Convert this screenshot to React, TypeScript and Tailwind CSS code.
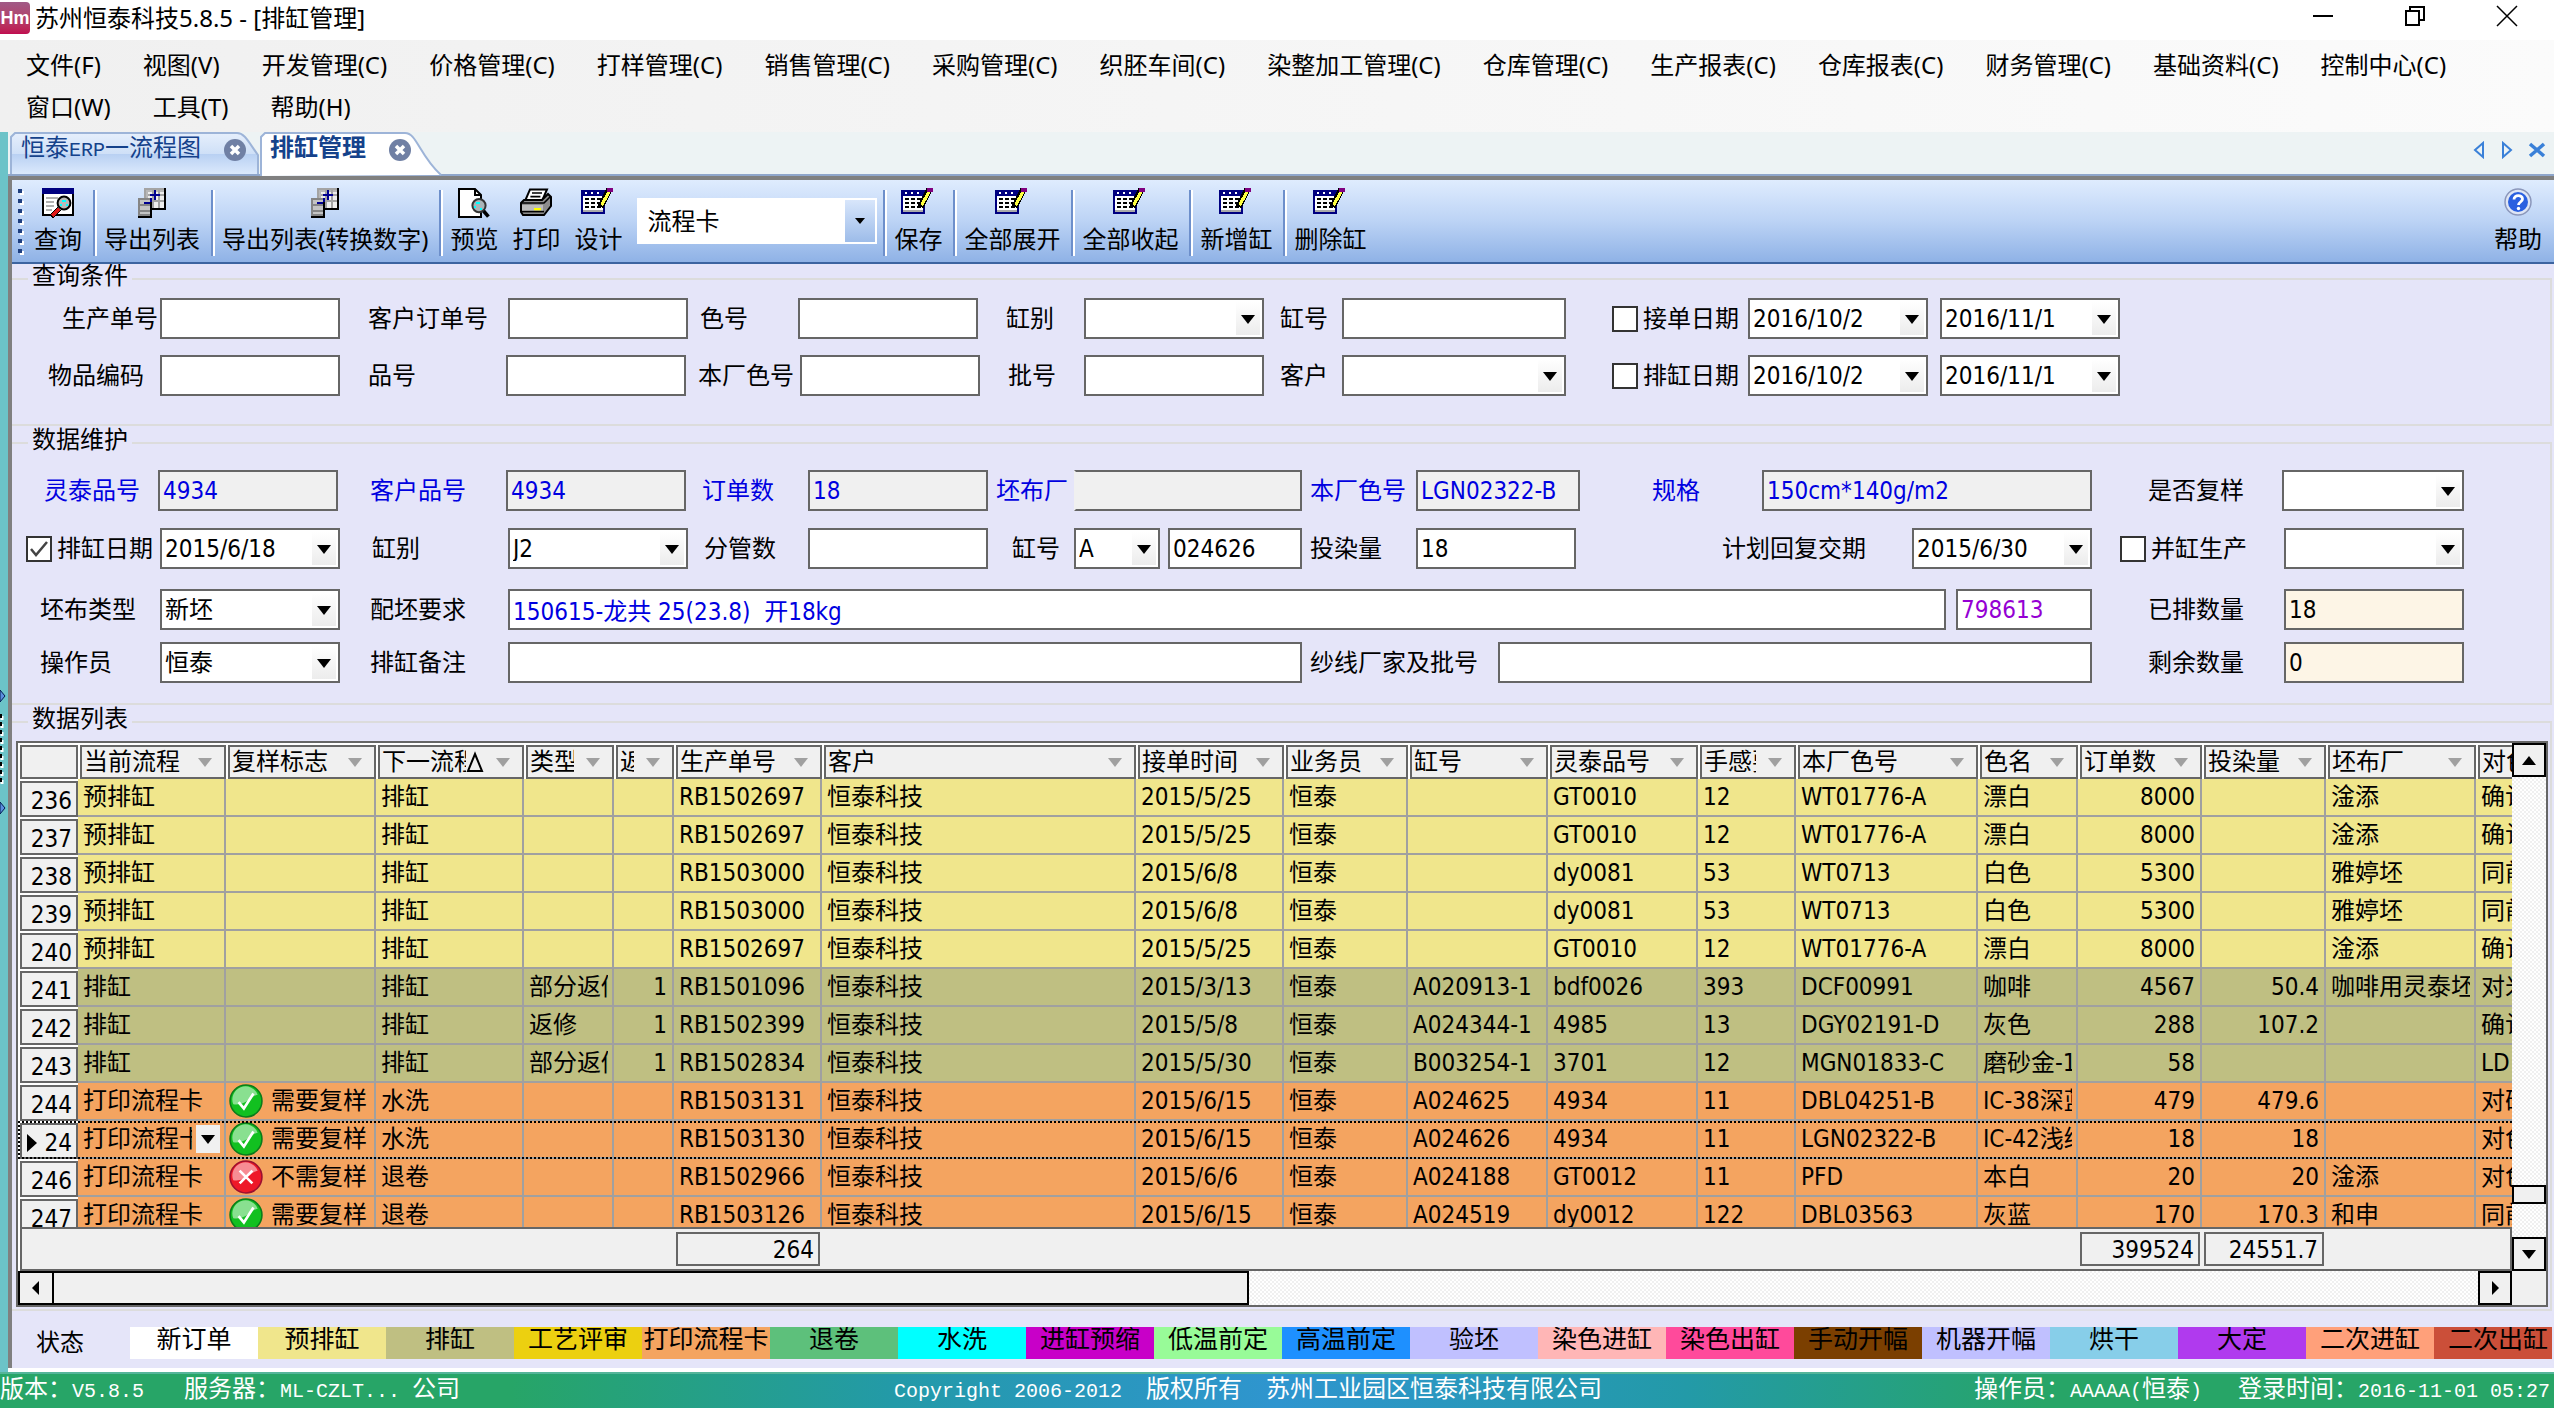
import React, { useId } from "react";
import clsx from "clsx";

type IconName = "query" | "export" | "preview" | "print" | "design" | "help";

interface Tool {
  label: string;
  icon: IconName;
}

interface Column {
  title: string;
  width: string;
  align?: "right";
  filter?: boolean;
  sorted?: boolean;
}

interface Row {
  no: string;
  tone: "plan" | "queue" | "card";
  cells: string[];
  flag?: "yes" | "no";
  current?: boolean;
}

const MENUS = [
  "文件(F)", "视图(V)", "开发管理(C)", "价格管理(C)", "打样管理(C)", "销售管理(C)", "采购管理(C)",
  "织胚车间(C)", "染整加工管理(C)", "仓库管理(C)", "生产报表(C)", "仓库报表(C)", "财务管理(C)",
  "基础资料(C)", "控制中心(C)", "窗口(W)", "工具(T)", "帮助(H)",
];

const COLUMNS: Column[] = [
  { title: "当前流程", width: "w-[148px]", filter: true },
  { title: "复样标志", width: "w-[150px]", filter: true },
  { title: "下一流程", width: "w-[148px]", filter: true, sorted: true },
  { title: "类型", width: "w-[90px]", filter: true },
  { title: "返修", width: "w-[60px]", filter: true, align: "right" },
  { title: "生产单号", width: "w-[148px]", filter: true },
  { title: "客户", width: "w-[314px]", filter: true },
  { title: "接单时间", width: "w-[148px]", filter: true },
  { title: "业务员", width: "w-[124px]", filter: true },
  { title: "缸号", width: "w-[140px]", filter: true },
  { title: "灵泰品号", width: "w-[150px]", filter: true },
  { title: "手感要求", width: "w-[98px]", filter: true },
  { title: "本厂色号", width: "w-[182px]", filter: true },
  { title: "色名", width: "w-[100px]", filter: true },
  { title: "订单数", width: "w-[124px]", filter: true, align: "right" },
  { title: "投染量", width: "w-[124px]", filter: true, align: "right" },
  { title: "坯布厂", width: "w-[150px]", filter: true },
  { title: "对色", width: "w-[100px]", filter: true },
];

const ROWS: Row[] = [
  { no: "236", tone: "plan", cells: ["预排缸", "", "排缸", "", "", "RB1502697", "恒泰科技", "2015/5/25", "恒泰", "", "GT0010", "12", "WT01776-A", "漂白", "8000", "", "淦添", "确认"] },
  { no: "237", tone: "plan", cells: ["预排缸", "", "排缸", "", "", "RB1502697", "恒泰科技", "2015/5/25", "恒泰", "", "GT0010", "12", "WT01776-A", "漂白", "8000", "", "淦添", "确认"] },
  { no: "238", tone: "plan", cells: ["预排缸", "", "排缸", "", "", "RB1503000", "恒泰科技", "2015/6/8", "恒泰", "", "dy0081", "53", "WT0713", "白色", "5300", "", "雅婷坯", "同前"] },
  { no: "239", tone: "plan", cells: ["预排缸", "", "排缸", "", "", "RB1503000", "恒泰科技", "2015/6/8", "恒泰", "", "dy0081", "53", "WT0713", "白色", "5300", "", "雅婷坯", "同前"] },
  { no: "240", tone: "plan", cells: ["预排缸", "", "排缸", "", "", "RB1502697", "恒泰科技", "2015/5/25", "恒泰", "", "GT0010", "12", "WT01776-A", "漂白", "8000", "", "淦添", "确认"] },
  { no: "241", tone: "queue", cells: ["排缸", "", "排缸", "部分返修", "1", "RB1501096", "恒泰科技", "2015/3/13", "恒泰", "A020913-1", "bdf0026", "393", "DCF00991", "咖啡", "4567", "50.4", "咖啡用灵泰坯", "对米"] },
  { no: "242", tone: "queue", cells: ["排缸", "", "排缸", "返修", "1", "RB1502399", "恒泰科技", "2015/5/8", "恒泰", "A024344-1", "4985", "13", "DGY02191-D", "灰色", "288", "107.2", "", "确认"] },
  { no: "243", tone: "queue", cells: ["排缸", "", "排缸", "部分返修", "1", "RB1502834", "恒泰科技", "2015/5/30", "恒泰", "B003254-1", "3701", "12", "MGN01833-C", "磨砂金-1", "58", "", "", "LD"] },
  { no: "244", tone: "card", flag: "yes", cells: ["打印流程卡", "需要复样", "水洗", "", "", "RB1503131", "恒泰科技", "2015/6/15", "恒泰", "A024625", "4934", "11", "DBL04251-B", "IC-38深蓝", "479", "479.6", "", "对确"] },
  { no: "24", tone: "card", flag: "yes", current: true, cells: ["打印流程卡", "需要复样", "水洗", "", "", "RB1503130", "恒泰科技", "2015/6/15", "恒泰", "A024626", "4934", "11", "LGN02322-B", "IC-42浅绿", "18", "18", "", "对色"] },
  { no: "246", tone: "card", flag: "no", cells: ["打印流程卡", "不需复样", "退卷", "", "", "RB1502966", "恒泰科技", "2015/6/6", "恒泰", "A024188", "GT0012", "11", "PFD", "本白", "20", "20", "淦添", "对色"] },
  { no: "247", tone: "card", flag: "yes", cells: ["打印流程卡", "需要复样", "退卷", "", "", "RB1503126", "恒泰科技", "2015/6/15", "恒泰", "A024519", "dy0012", "122", "DBL03563", "灰蓝", "170", "170.3", "和申", "同前"] },
];

const TONES = {
  plan: "bg-[#f0e68c]",
  queue: "bg-[#bfbf82]",
  card: "bg-[#f4a460]",
};

const STATES = [
  { label: "新订单", color: "bg-white" },
  { label: "预排缸", color: "bg-[#f0e68c]" },
  { label: "排缸", color: "bg-[#bfbf82]" },
  { label: "工艺评审", color: "bg-[#ecd010]" },
  { label: "打印流程卡", color: "bg-[#f4a460]" },
  { label: "退卷", color: "bg-[#5dc07b]" },
  { label: "水洗", color: "bg-[#00ffff]" },
  { label: "进缸预缩", color: "bg-[#c800c8]" },
  { label: "低温前定", color: "bg-[#98fb98]" },
  { label: "高温前定", color: "bg-[#1e90ff]" },
  { label: "验坯", color: "bg-[#c0c0ff]" },
  { label: "染色进缸", color: "bg-[#ffb6b6]" },
  { label: "染色出缸", color: "bg-[#ff4a9b]" },
  { label: "手动开幅", color: "bg-[#7b3f00]" },
  { label: "机器开幅", color: "bg-[#c0c0ff]" },
  { label: "烘干", color: "bg-[#87cee9]" },
  { label: "大定", color: "bg-[#b03aee]" },
  { label: "二次进缸", color: "bg-[#ffa07a]" },
  { label: "二次出缸", color: "bg-[#cb4f39]" },
];

const BOX = "h-[41px] border-2 border-[#666] px-[3px] leading-6 outline-none";

/* ---------- icons ---------- */

const ToolIcon: React.FC<{ name: IconName }> = ({ name }) => {
  if (name === "query") {
    return (
      <svg width="32" height="32" viewBox="0 0 16 16" shapeRendering="crispEdges">
        <path d="M.5.5h15v13H.5z" fill="#fff" stroke="#000" />
        <path d="M0 0h16v3H0z" fill="#000080" />
        <path d="M2 5h6M2 7h4M2 9h4M2 11h3" stroke="#b0b0b0" />
        <circle cx="11" cy="7.5" r="3.2" fill="#b9b9b9" stroke="#000" shapeRendering="auto" />
        <path d="M10 6h2v1h-2zM12 8h1v1h-1zM9 8h1v1H9z" fill="#0ff" />
        <path d="M8.500 10.500L4.500 14.500" stroke="#000" strokeWidth="2.600" />
        <path d="M8.500 10.500L5 14" stroke="#e01818" strokeWidth="1.500" />
      </svg>
    );
  }
  if (name === "export") {
    return (
      <svg width="32" height="32" viewBox="0 0 16 16" shapeRendering="crispEdges">
        <path d="M4 0h11v11H4z" fill="#000" />
        <path d="M4 0h10v10H4z" fill="#eee" />
        <path d="M4 0h10v2H4zM4 0h2v6H4z" fill="#b8b8b8" />
        <path d="M4 .5h10M4.500 0v5M6 3.500h8M6 6.500h8M8.500 1v9M11.500 1v9" stroke="#a4a4a4" fill="none" />
        <path d="M1 5h7v10H1z" fill="#000" />
        <path d="M1 5h6v9H1z" fill="#c4c4c4" />
        <path d="M1.500 5v9M1 5.500h6M2 8.500h5M2 11.500h5M1 13.500h6" stroke="#858585" fill="none" />
        <path d="M4 7h3v1H4zM7 5h1v2H7zM7 3h5v1H7zM9 1h1v5H9z" fill="#000090" />
      </svg>
    );
  }
  if (name === "preview") {
    return (
      <svg width="32" height="32" viewBox="0 0 16 16">
        <path d="M.5.5h8l3 3v11H.5z" fill="#fff" stroke="#000" />
        <path d="M8.500.5v3h3" fill="none" stroke="#000" />
        <circle cx="10.500" cy="8.800" r="3.300" fill="#aab4b8" stroke="#333" />
        <path d="M9 7h2v1H9zM8 9h1v1H8zM11 10h1v1h-1z" fill="#0ff" />
        <path d="M12.800 11.500l2.400 2.800" stroke="#000" strokeWidth="1.800" />
      </svg>
    );
  }
  if (name === "print") {
    return (
      <svg width="32" height="32" viewBox="0 0 16 16">
        <path d="M5 .7h8.500L11 6.500H2.500z" fill="#fff" stroke="#000" />
        <path d="M6 2.500h5M5.200 4.300h5" stroke="#000" strokeWidth=".8" />
        <path d="M2 6h9l3-3 1.500 1.500V9l-3.500 4.500H1.500L.5 12V7.500z" fill="#8d8d8d" stroke="#000" />
        <path d="M1 7.500h11l3-3" stroke="#000" fill="none" strokeWidth=".8" />
        <path d="M1 8.500h10.500v3H1z" fill="#bcbcbc" />
        <path d="M7 10h3.500v1.200H7z" fill="#ff0" />
        <path d="M1 11.800h11" stroke="#000" strokeWidth=".8" />
      </svg>
    );
  }
  if (name === "design") {
    return (
      <svg width="34" height="32" viewBox="0 0 17 16" shapeRendering="crispEdges">
        <path d="M0 1h12v12H0z" fill="#000080" />
        <path d="M1 4h10v7H1z" fill="#fff" />
        <path d="M1 11h10v1H1z" fill="#aaa" />
        <path d="M2 2.500h1M5 2.500h1M8 2.500h1" stroke="#fff" />
        <path d="M2 5.500h8M2 7.500h8M2 9.500h8" stroke="#000" strokeDasharray="2 1" />
        <path d="M14.500 0L9.800 9.500" stroke="#000" strokeWidth="3" />
        <path d="M14 2L10.300 8.500" stroke="#ffff40" strokeWidth="1.600" />
        <path d="M13 0h3v2h-3z" fill="#800080" />
      </svg>
    );
  }
  return (
    <svg width="32" height="32" viewBox="0 0 32 32">
      <circle cx="16" cy="14" r="13" fill="#dfe6f5" stroke="#8b97bb" strokeWidth="1.500" />
      <circle cx="16" cy="14" r="10" fill="#2a60e0" />
      <path d="M12 11.500c0-5 8.500-5 8.500-.5 0 3-4 3-4 6" fill="none" stroke="#fff" strokeWidth="2.800" />
      <circle cx="16.500" cy="20.500" r="1.700" fill="#fff" />
    </svg>
  );
};

const CloseDot: React.FC = () => (
  <svg width="24" height="24" viewBox="0 0 24 24">
    <circle cx="12" cy="12" r="11" fill="#7080a4" />
    <path d="M8 8l8 8M16 8l-8 8" stroke="#fff" strokeWidth="3.500" />
  </svg>
);

const FlagIcon: React.FC<{ kind: "yes" | "no" }> = ({ kind }) => (
  <svg className="shrink-0" width="34" height="34" viewBox="0 0 32 32">
    <circle cx="16" cy="16" r="15" fill={kind === "yes" ? "#12c020" : "#ee1828"} stroke={kind === "yes" ? "#0c7a1c" : "#9c1030"} strokeWidth="1.500" />
    <path d="M4 19A12 12 0 0 1 27 10C21 11 16 21 4 19z" fill="#fff" opacity=".5" />
    <path d={kind === "yes" ? "M9 17l5 6 9-14" : "M10 10l12 12M22 10L10 22"} fill="none" stroke="#fff" strokeWidth="2.500" />
  </svg>
);

const Triangle: React.FC<{ className?: string; d?: string }> = ({ className, d = "M0 0h14L7 9z" }) => (
  <svg className={className} width="14" height="14" viewBox="0 -3 14 14" fill="currentColor">
    <path d={d} />
  </svg>
);

/* ---------- form parts ---------- */

interface TextProps {
  label: string;
  labelClass: string;
  className: string;
  value?: string;
}

const TextField: React.FC<TextProps> = ({ label, labelClass, className, value = "" }) => {
  const id = useId();
  return (
    <>
      <label htmlFor={id} className={clsx("shrink-0 whitespace-nowrap", labelClass)}>{label}</label>
      <input id={id} defaultValue={value} className={clsx(BOX, className)} />
    </>
  );
};

const Drop: React.FC<{ id?: string; title?: string; className: string; value?: string }> = ({ id, title, className, value = "" }) => (
  <div className={clsx("relative", className)}>
    <select id={id} aria-label={title} className={clsx(BOX, "w-full appearance-none bg-white")}>
      <option>{value}</option>
    </select>
    <span className="pointer-events-none absolute top-1 right-1 bottom-1 flex w-6 items-center justify-center bg-gradient-to-b from-white to-[#ececec]">
      <Triangle />
    </span>
  </div>
);

const SelectField: React.FC<TextProps> = ({ label, labelClass, className, value }) => {
  const id = useId();
  return (
    <>
      <label htmlFor={id} className={clsx("shrink-0 whitespace-nowrap", labelClass)}>{label}</label>
      <Drop id={id} className={className} value={value} />
    </>
  );
};

const Check: React.FC<{ label: string; className: string; checked?: boolean }> = ({ label, className, checked }) => (
  <label className={clsx("flex shrink-0 items-center gap-[5px] whitespace-nowrap", className)}>
    <span className="relative flex">
      <input type="checkbox" defaultChecked={checked} className="peer h-[26px] w-[26px] appearance-none border-2 border-[#333] bg-white" />
      <svg className="pointer-events-none absolute inset-0 hidden peer-checked:block" width="26" height="26" viewBox="0 0 26 26">
        <path d="M5 13l5 6L21 6" fill="none" stroke="#444" strokeWidth="2.500" />
      </svg>
    </span>
    {label}
  </label>
);

const Group: React.FC<{ title: string; className?: string; children: React.ReactNode }> = ({ title, className, children }) => (
  <fieldset className={clsx("mr-[2px] min-w-0 border-2 border-l-0 border-[#dcdcdc]", className)}>
    <legend className="ml-4 h-[30px] px-1 leading-6">{title}</legend>
    {children}
  </fieldset>
);

/* ---------- window parts ---------- */

const TitleBar: React.FC = () => (
  <header className="flex h-10 items-start justify-between bg-white">
    <div className="flex items-center gap-[5px]">
      <span className="flex h-8 w-[30px] items-center justify-center rounded-r bg-gradient-to-b from-[#a05a86] to-[#c00a50] font-['Liberation_Sans',sans-serif] text-[18px] font-bold text-white">Hm</span>
      <h1 className="leading-9">苏州恒泰科技5.8.5 - [排缸管理]</h1>
    </div>
    <div className="flex gap-[70px] pt-[5px] pr-9">
      <button aria-label="最小化">
        <svg width="22" height="22" viewBox="0 0 22 22"><path d="M1 11h20" stroke="#000" strokeWidth="2" /></svg>
      </button>
      <button aria-label="还原">
        <svg width="22" height="22" viewBox="0 0 22 22"><path d="M2 6h13v14H2zM6 6V2h14v13h-5" fill="none" stroke="#000" strokeWidth="2" /></svg>
      </button>
      <button aria-label="关闭">
        <svg width="22" height="22" viewBox="0 0 22 22"><path d="M1 1l20 20M21 1L1 21" stroke="#000" strokeWidth="1.500" /></svg>
      </button>
    </div>
  </header>
);

const MenuBar: React.FC = () => (
  <nav className="flex h-[92px] flex-wrap content-start gap-x-[42px] bg-gradient-to-r from-[#f0f0f0] to-[#fbfbfb] pt-1 pr-16 pl-[26px]">
    {MENUS.map((m) => (
      <button key={m} className="h-[42px] whitespace-nowrap">{m}</button>
    ))}
  </nav>
);

const TabStrip: React.FC = () => (
  <div className="flex h-12 justify-between border-b-4 border-b-[#808080] bg-[#edf3f4] font-['Liberation_Mono','Noto_Sans_CJK_SC',monospace] text-[#15428b] shadow-[inset_0_-2px_0_#8fa6cb]">
    <div className="flex pl-[2px]">
      <button className="relative flex h-[42px] w-[250px] items-start gap-[22px] pt-[6px] pl-[11px]">
        <svg className="absolute inset-0" width="250" height="42" viewBox="0 0 250 42">
          <defs>
            <linearGradient id="tab" x2="0" y2="1">
              <stop offset="0" stopColor="#e6effc" />
              <stop offset=".5" stopColor="#cfe0f7" />
              <stop offset=".51" stopColor="#b8d0f2" />
              <stop offset="1" stopColor="#dbe9fc" />
            </linearGradient>
          </defs>
          <path d="M1 42V5l4-4h222c8 0 12 10 21 22v19" fill="url(#tab)" stroke="#9db4d8" strokeWidth="2" />
        </svg>
        <span className="relative leading-6 whitespace-nowrap">恒泰<span className="text-[20px]">ERP</span>一流程图</span>
        <span className="relative"><CloseDot /></span>
      </button>
      <button className="relative flex h-11 w-[182px] items-start gap-[22px] pt-[6px] pl-[10px] font-bold">
        <svg className="absolute inset-0" width="182" height="44" viewBox="0 0 182 44">
          <path d="M1 44V5l4-4h140c12 0 14 22 36 42" fill="#fff" stroke="#9db4d8" strokeWidth="2" />
        </svg>
        <span className="relative leading-6 whitespace-nowrap">排缸管理</span>
        <span className="relative"><CloseDot /></span>
      </button>
    </div>
    <div className="flex h-9 items-center gap-[14px] pr-[8px] text-[#3a80d8]">
      <button aria-label="上一个"><svg width="14" height="18" viewBox="0 0 14 18"><path d="M11 2v14L3 9z" fill="none" stroke="currentColor" strokeWidth="2" /></svg></button>
      <button aria-label="下一个"><svg width="14" height="18" viewBox="0 0 14 18"><path d="M3 2v14l8-7z" fill="none" stroke="currentColor" strokeWidth="2" /></svg></button>
      <button aria-label="关闭标签"><svg width="18" height="18" viewBox="0 0 18 18"><path d="M2 3l14 12M16 3L2 15" stroke="currentColor" strokeWidth="3.500" /></svg></button>
    </div>
  </div>
);

const ToolButton: React.FC<Tool> = ({ label, icon }) => (
  <button className="flex flex-col items-center gap-[7px] px-[7px] whitespace-nowrap">
    <ToolIcon name={icon} />
    <span className="leading-6">{label}</span>
  </button>
);

const Separator: React.FC = () => (
  <span className="mt-[2px] ml-1 h-[66px] w-1 border-r-2 border-l-2 border-r-white border-l-[#6d8fcb]" />
);

const Toolbar: React.FC = () => (
  <div className="flex h-[84px] items-start border-b-2 border-[#3c64a0] bg-gradient-to-b from-[#dfecfe] via-[#bcd3f5] to-[#8fb2e6] pt-2 font-['Noto_Sans','Noto_Sans_CJK_SC',sans-serif]">
    <svg className="mr-[3px] ml-[6px]" width="6" height="68" viewBox="0 0 6 68">
      <path d="M4 3v64" stroke="#fff" strokeWidth="4" strokeDasharray="4 6" />
      <path d="M2 1v64" stroke="#1f3f80" strokeWidth="4" strokeDasharray="4 6" />
    </svg>
    <ToolButton label="查询" icon="query" />
    <Separator />
    <ToolButton label="导出列表" icon="export" />
    <Separator />
    <ToolButton label="导出列表(转换数字)" icon="export" />
    <Separator />
    <ToolButton label="预览" icon="preview" />
    <ToolButton label="打印" icon="print" />
    <ToolButton label="设计" icon="design" />
    <div className="relative mt-[10px] mr-[2px] ml-2 w-[240px]">
      <select aria-label="报表" className="h-[46px] w-full appearance-none border-2 border-white bg-white px-2 leading-6">
        <option>流程卡</option>
      </select>
      <span className="pointer-events-none absolute top-[2px] right-[2px] bottom-[2px] flex w-[30px] items-center justify-center bg-gradient-to-b from-[#d8e6fb] to-[#9dbce9]">
        <Triangle d="M2 1h10L7 7z" />
      </span>
    </div>
    <Separator />
    <ToolButton label="保存" icon="design" />
    <Separator />
    <ToolButton label="全部展开" icon="design" />
    <Separator />
    <ToolButton label="全部收起" icon="design" />
    <Separator />
    <ToolButton label="新增缸" icon="design" />
    <Separator />
    <ToolButton label="删除缸" icon="design" />
    <div className="mr-[5px] ml-auto"><ToolButton label="帮助" icon="help" /></div>
  </div>
);

const QueryForm: React.FC = () => (
  <Group title="查询条件" className="pb-7">
    <div className="flex items-center pt-1">
      <TextField label="生产单号" labelClass="w-[148px] pl-[50px]" className="w-[180px] bg-white" />
      <TextField label="客户订单号" labelClass="w-[168px] pl-7" className="w-[180px] bg-white" />
      <TextField label="色号" labelClass="w-[110px] pl-3" className="w-[180px] bg-white" />
      <SelectField label="缸别" labelClass="w-[106px] pl-7" className="w-[180px]" />
      <TextField label="缸号" labelClass="w-[78px] pl-4" className="w-[224px] bg-white" />
      <Check label="接单日期" className="w-[182px] pl-[46px]" />
      <Drop title="接单日期起" className="w-[180px]" value="2016/10/2" />
      <Drop title="接单日期止" className="ml-3 w-[180px]" value="2016/11/1" />
    </div>
    <div className="flex items-center pt-4">
      <TextField label="物品编码" labelClass="w-[148px] pl-9" className="w-[180px] bg-white" />
      <TextField label="品号" labelClass="w-[166px] pl-7" className="w-[180px] bg-white" />
      <TextField label="本厂色号" labelClass="w-[114px] pl-3" className="w-[180px] bg-white" />
      <TextField label="批号" labelClass="w-[104px] pl-7" className="w-[180px] bg-white" />
      <SelectField label="客户" labelClass="w-[78px] pl-4" className="w-[224px]" />
      <Check label="排缸日期" className="w-[182px] pl-[46px]" />
      <Drop title="排缸日期起" className="w-[180px]" value="2016/10/2" />
      <Drop title="排缸日期止" className="ml-3 w-[180px]" value="2016/11/1" />
    </div>
  </Group>
);

const EditForm: React.FC = () => (
  <Group title="数据维护" className="mt-[2px] pb-5">
    <div className="flex items-center pt-3">
      <TextField label="灵泰品号" labelClass="w-[146px] pl-8 text-[#0000e0]" className="w-[180px] bg-[#f0f0f0] text-[#0000e0]" value="4934" />
      <TextField label="客户品号" labelClass="w-[168px] pl-8 text-[#0000e0]" className="w-[180px] bg-[#f0f0f0] text-[#0000e0]" value="4934" />
      <TextField label="订单数" labelClass="w-[122px] pl-4 text-[#0000e0]" className="w-[180px] bg-[#f0f0f0] text-[#0000e0]" value="18" />
      <TextField label="坯布厂" labelClass="w-[86px] pl-2 text-[#0000e0]" className="w-[228px] border-l-[#f0f0f0] bg-[#f0f0f0] text-[#0000e0]" />
      <TextField label="本厂色号" labelClass="w-[114px] pl-2 text-[#0000e0]" className="w-[164px] bg-[#f0f0f0] text-[#0000e0]" value="LGN02322-B" />
      <TextField label="规格" labelClass="w-[182px] pl-[72px] text-[#0000e0]" className="w-[330px] bg-[#f0f0f0] text-[#0000e0]" value="150cm*140g/m2" />
      <SelectField label="是否复样" labelClass="w-[190px] pl-14" className="w-[182px]" />
    </div>
    <div className="flex items-center pt-[17px]">
      <Check label="排缸日期" className="w-[148px] pl-[14px]" checked />
      <Drop title="排缸日期" className="w-[180px]" value="2015/6/18" />
      <SelectField label="缸别" labelClass="w-[168px] pl-8" className="w-[180px]" value="J2" />
      <TextField label="分管数" labelClass="w-[120px] pl-4" className="w-[180px] bg-white" />
      <SelectField label="缸号" labelClass="w-[86px] pl-6" className="w-[86px]" value="A" />
      <input aria-label="缸号编号" defaultValue="024626" className={clsx(BOX, "ml-2 w-[134px] bg-white")} />
      <TextField label="投染量" labelClass="w-[114px] pl-2" className="w-[160px] bg-white" value="18" />
      <SelectField label="计划回复交期" labelClass="w-[336px] pl-[146px]" className="w-[180px]" value="2015/6/30" />
      <Check label="并缸生产" className="w-[192px] pl-7" />
      <Drop title="并缸生产" className="w-[180px]" />
    </div>
    <div className="flex items-center pt-5">
      <SelectField label="坯布类型" labelClass="w-[148px] pl-7" className="w-[180px]" value="新坯" />
      <TextField label="配坯要求" labelClass="w-[168px] pl-[30px]" className="w-[1438px] bg-white text-[#0000e0]" value="150615-龙共 25(23.8)  开18kg" />
      <input aria-label="配坯编号" defaultValue="798613" className={clsx(BOX, "ml-[10px] w-[136px] bg-white text-[#9400d3]")} />
      <TextField label="已排数量" labelClass="w-[192px] pl-14" className="w-[180px] bg-[#fdf5e6]" value="18" />
    </div>
    <div className="flex items-center pt-3">
      <SelectField label="操作员" labelClass="w-[148px] pl-7" className="w-[180px]" value="恒泰" />
      <TextField label="排缸备注" labelClass="w-[168px] pl-[30px]" className="w-[794px] bg-white" />
      <TextField label="纱线厂家及批号" labelClass="w-[196px] pl-2" className="w-[594px] bg-white" />
      <TextField label="剩余数量" labelClass="w-[192px] pl-14" className="w-[180px] bg-[#fdf5e6]" value="0" />
    </div>
  </Group>
);

const GridCell: React.FC<{ row: Row; index: number }> = ({ row, index }) => {
  const text = row.cells[index];
  return (
    <td className={clsx("h-[38px] border-r-2 border-b-2 border-[#a0a0a0] p-0", TONES[row.tone])}>
      <div className={clsx("flex h-[34px] items-center overflow-hidden whitespace-nowrap", COLUMNS[index].align === "right" ? "justify-end pr-[5px]" : "mr-1 pl-[5px]")}>
        {index === 1 && row.flag ? (
          <span className="-ml-[2px] flex items-center gap-2"><FlagIcon kind={row.flag} />{text}</span>
        ) : index === 0 && row.current ? (
          <>
            <span className="min-w-0 flex-1 overflow-hidden">{text}</span>
            <button aria-label="选择流程" className="ml-1 flex h-7 w-6 shrink-0 items-center justify-center bg-[#f0f0f0]"><Triangle /></button>
          </>
        ) : text}
      </div>
    </td>
  );
};

const TRACK = "bg-[repeating-conic-gradient(#fff_0_25%,#f0f0f0_0_50%)] bg-[length:4px_4px]";
const SCROLL_BUTTON = "flex shrink-0 items-center justify-center border-2 border-black bg-[#f0f0f0]";

const DataGrid: React.FC = () => (
  <div className="mt-1 mr-[2px] ml-1 border-2 border-[#666] bg-white">
    <div className="flex h-[528px]">
      <div className="flex min-w-0 flex-1 flex-col">
        <div className="h-[484px] overflow-hidden">
          <table className="w-[2558px] table-fixed border-separate border-spacing-0 text-left font-normal">
            <thead>
              <tr className="bg-white">
                <th className="h-9 w-[60px] p-0 pt-[2px] pl-[2px]"><div className="h-[34px] border-2 border-[#666] bg-[#f0f0f0]" /></th>
                {COLUMNS.map((c) => (
                  <th key={c.title} className={clsx("h-9 p-0 pt-[2px] pl-[2px] font-normal", c.width)}>
                    <div className="flex h-[34px] items-center overflow-hidden border-2 border-[#666] bg-[#f0f0f0] pl-[2px] whitespace-nowrap">
                      <span className="min-w-0 flex-1 overflow-hidden leading-[30px]">{c.title}</span>
                      {c.sorted && <svg width="18" height="24" viewBox="0 0 18 24"><path d="M9 4l7 17H2z" fill="none" stroke="#000" strokeWidth="2" /></svg>}
                      {c.filter && <Triangle className="mr-3 ml-3 shrink-0 text-[#a0a0a0]" />}
                    </div>
                  </th>
                ))}
              </tr>
            </thead>
            <tbody>
              {ROWS.map((row) => (
                <tr key={row.no} className={clsx(row.current && "outline-2 -outline-offset-2 outline-black outline-dotted")}>
                  <td className="h-[38px] p-0 pt-[2px] pl-[2px]">
                    <div className="flex h-9 items-center justify-end gap-2 overflow-hidden border-2 border-[#666] bg-[#f0f0f0] pt-1 pr-1">
                      {row.current && <svg width="10" height="18" viewBox="0 0 10 18"><path d="M0 0l10 9-10 9z" /></svg>}
                      {row.no}
                    </div>
                  </td>
                  {COLUMNS.map((c, i) => <GridCell key={c.title} row={row} index={i} />)}
                </tr>
              ))}
            </tbody>
          </table>
        </div>

        {/* Totals */}
        <div className="ml-[2px] flex h-11 items-center border-2 border-[#666] bg-[#f0f0f0] text-right">
          <output className="ml-[654px] h-[34px] w-[144px] border-2 border-[#666] pr-1 leading-[32px]">264</output>
          <output className="ml-[1260px] h-[34px] w-[120px] border-2 border-[#666] pr-1 leading-[32px]">399524</output>
          <output className="ml-1 h-[34px] w-[120px] border-2 border-[#666] pr-1 leading-[32px]">24551.7</output>
        </div>
      </div>
      <div className={clsx("flex w-[34px] flex-col", TRACK)}>
        <button aria-label="向上" className={clsx(SCROLL_BUTTON, "h-[34px]")}><Triangle d="M0 9h14L7 0z" /></button>
        <span className="mt-auto mb-[33px] h-[19px] border-2 border-black bg-[#f0f0f0]" />
        <button aria-label="向下" className={clsx(SCROLL_BUTTON, "h-[34px]")}><Triangle /></button>
      </div>
    </div>
    <div className="flex h-[34px] bg-[#f0f0f0]">
      <div className={clsx("flex flex-1", TRACK)}>
        <button aria-label="向左" className={clsx(SCROLL_BUTTON, "w-9")}><Triangle d="M10 -3v14L3 4z" /></button>
        <span className="-ml-[2px] w-[48%] border-2 border-black bg-[#f0f0f0]" />
        <button aria-label="向右" className={clsx(SCROLL_BUTTON, "ml-auto w-[34px]")}><Triangle d="M4 -3v14l7-7z" /></button>
      </div>
      <span className="w-[34px]" />
    </div>
  </div>
);

const StateLegend: React.FC = () => (
  <div className="mr-[2px] flex items-center overflow-hidden pt-4">
    <span className="w-[118px] shrink-0 pl-6">状态</span>
    {STATES.map((s) => (
      <span key={s.label} className={clsx("flex h-8 w-[128px] shrink-0 justify-center overflow-hidden text-[25px] leading-[26px] whitespace-nowrap", s.color)}>{s.label}</span>
    ))}
  </div>
);

const StatusBar: React.FC = () => (
  <footer className="flex h-9 items-center overflow-hidden border-t-2 border-[#55b59a] bg-[linear-gradient(to_right,#27a567_0%,#27a567_20%,#239aa8_35%,#2f95cf_50%,#239aa8_66%,#27a567_80%)] font-['Liberation_Mono','Noto_Sans_CJK_SC',monospace] text-[20px] leading-6 whitespace-pre text-white">
    <div className="flex w-[35%] items-baseline gap-10">
      <span><span className="text-2xl">版本：</span>V5.8.5</span>
      <span><span className="text-2xl">服务器：</span>ML-CZLT... <span className="text-2xl">公司</span></span>
    </div>
    <div className="flex items-baseline gap-6">
      <span>Copyright 2006-2012  <span className="text-2xl">版权所有</span></span>
      <span className="text-2xl">苏州工业园区恒泰科技有限公司</span>
    </div>
    <div className="ml-auto flex items-baseline gap-9 pr-1">
      <span><span className="text-2xl">操作员：</span>AAAAA(<span className="text-2xl">恒泰</span>)</span>
      <span><span className="text-2xl">登录时间：</span>2016-11-01 05:27</span>
    </div>
  </footer>
);

export default function App() {
  return (
    <div className="flex min-h-screen flex-col overflow-hidden bg-[#e5e5f9] font-['Noto_Sans','Noto_Sans_CJK_SC',sans-serif] text-2xl leading-6 text-black">
      <TitleBar />
      <MenuBar />
      <div className="flex flex-1">
        <aside className="flex w-2 shrink-0 flex-col items-center justify-center bg-[#6cc3c8]">
          <svg width="8" height="128" viewBox="0 0 8 128">
            <path d="M0 2l5 6-5 6zM0 114l5 6-5 6z" fill="#5a8fe0" stroke="#001a50" />
            <path d="M2 28v72" stroke="#fff" strokeWidth="3" strokeDasharray="4 4" />
            <path d="M1 26v72" stroke="#000" strokeWidth="2" strokeDasharray="4 4" />
          </svg>
        </aside>
        <main className="flex min-w-0 flex-1 flex-col border-b-4 border-white">
          <TabStrip />
          <div className="flex-1 border-l-4 border-[#808080] font-['DejaVu_Sans_Condensed','Noto_Sans_CJK_SC',sans-serif]">
            <Toolbar />
            <QueryForm />
            <EditForm />
            <Group title="数据列表" className="mt-[2px] pb-[2px]">
              <DataGrid />
            </Group>
            <StateLegend />
          </div>
        </main>
      </div>
      <StatusBar />
    </div>
  );
}
